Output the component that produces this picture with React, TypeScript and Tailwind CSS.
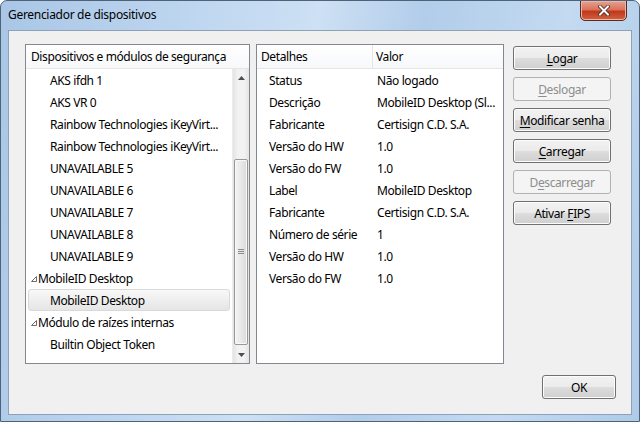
import React from "react";

type Row = { t: string; kind: "child" | "parent" | "selected" };

const tree: Row[] = [
  { t: "AKS ifdh 1", kind: "child" },
  { t: "AKS VR 0", kind: "child" },
  { t: "Rainbow Technologies iKeyVirt...", kind: "child" },
  { t: "Rainbow Technologies iKeyVirt...", kind: "child" },
  { t: "UNAVAILABLE 5", kind: "child" },
  { t: "UNAVAILABLE 6", kind: "child" },
  { t: "UNAVAILABLE 7", kind: "child" },
  { t: "UNAVAILABLE 8", kind: "child" },
  { t: "UNAVAILABLE 9", kind: "child" },
  { t: "MobileID Desktop", kind: "parent" },
  { t: "MobileID Desktop", kind: "selected" },
  { t: "Módulo de raízes internas", kind: "parent" },
  { t: "Builtin Object Token", kind: "child" },
];

const details: [string, string][] = [
  ["Status", "Não logado"],
  ["Descrição", "MobileID Desktop (Sl..."],
  ["Fabricante", "Certisign C.D. S.A."],
  ["Versão do HW", "1.0"],
  ["Versão do FW", "1.0"],
  ["Label", "MobileID Desktop"],
  ["Fabricante", "Certisign C.D. S.A."],
  ["Número de série", "1"],
  ["Versão do HW", "1.0"],
  ["Versão do FW", "1.0"],
];

function Tri() {
  return (
    <svg width="6" height="6" viewBox="0 0 6 6" className="shrink-0">
      <polygon points="5.5,0.5 5.5,5.5 0.5,5.5" fill="none" stroke="#6b6b6b" strokeWidth="1" />
    </svg>
  );
}

function Btn({
  pre,
  u,
  post,
  disabled,
}: {
  pre: string;
  u: string;
  post: string;
  disabled?: boolean;
}) {
  return (
    <div
      className={
        disabled
          ? "h-[24px] w-[98px] rounded-[3px] border border-[#adb2b5] bg-[#f4f4f4] text-[#8d8d8d] flex items-center justify-center pt-[1px]"
          : "h-[24px] w-[98px] rounded-[3px] border border-[#707070] bg-[linear-gradient(#f2f2f2_0%,#ebebeb_50%,#dddddd_51%,#cfcfcf_100%)] text-black flex items-center justify-center pt-[1px] shadow-[inset_0_0_0_1px_#fcfcfc]"
      }
    >
      <span>
        {pre}
        <span className="underline underline-offset-[2px]">{u}</span>
        {post}
      </span>
    </div>
  );
}

export default function App() {
  return (
    <div className="w-[640px] h-[422px] relative overflow-hidden rounded-t-[7px] border border-[#4f6378] bg-[linear-gradient(100deg,#a9c6e6_0%,#bcd5ef_25%,#cde0f4_45%,#b2cdea_60%,#c3daf1_80%,#afcbe8_100%)] font-['Noto_Sans',sans-serif] text-[12px] text-black flex flex-col">
      {/* title bar */}
      <div className="h-[29px] shrink-0 flex items-center pl-[7px] pb-[1px] text-[12px] tracking-[-0.3px]">
        Gerenciador de dispositivos
      </div>
      <div className="absolute top-[-1px] right-[12px] w-[47px] h-[21px] rounded-b-[5px] border border-[#5a2a21] bg-[linear-gradient(#e8a190_0%,#d9735c_45%,#c0391d_55%,#d2613d_100%)] flex items-center justify-center shadow-[inset_0_0_0_1px_#f0b4a5]">
        <svg width="12" height="11" viewBox="0 0 12 11">
          <path d="M2 1.5 L10 9.5 M10 1.5 L2 9.5" stroke="#3a1a14" strokeWidth="3.4" strokeLinecap="square" />
          <path d="M2 1.5 L10 9.5 M10 1.5 L2 9.5" stroke="#ffffff" strokeWidth="2" strokeLinecap="square" />
        </svg>
      </div>

      {/* client area */}
      <div className="mx-[7px] h-[385px] border border-[#8ea1b6] bg-[#f0f0f0] flex flex-col pl-[16px] pr-[15px] pt-[13px] tracking-[-0.4px]">
        <div className="flex h-[320px]">
          {/* tree panel */}
          <div className="w-[225px] h-[320px] border border-[#828790] bg-white flex flex-col">
            <div className="h-[24px] shrink-0 flex items-center pl-[5px] pt-[1px] border-b border-[#e5e5e5] bg-[linear-gradient(#ffffff,#f7f8fa)]">
              Dispositivos e módulos de segurança
            </div>
            <div className="flex flex-1 min-h-0">
              <div className="flex-1 flex flex-col">
                {tree.map((r, i) =>
                  r.kind === "parent" ? (
                    <div key={i} className="h-[22px] flex items-center pl-[5px] pt-[2px] gap-[1px]">
                      <Tri />
                      <span className="whitespace-nowrap">{r.t}</span>
                    </div>
                  ) : r.kind === "selected" ? (
                    <div
                      key={i}
                      className="h-[22px] mx-[2px] flex items-center pl-[21px] pt-[2px] rounded-[3px] border border-[#d9d9d9] bg-[linear-gradient(#f8f8f8,#e5e5e5)]"
                    >
                      <span className="whitespace-nowrap">{r.t}</span>
                    </div>
                  ) : (
                    <div key={i} className="h-[22px] flex items-center pl-[24px] pt-[2px]">
                      <span className="whitespace-nowrap">{r.t}</span>
                    </div>
                  )
                )}
              </div>
              {/* scrollbar */}
              <div className="w-[17px] shrink-0 flex flex-col bg-[linear-gradient(90deg,#e3e3e3,#f2f2f2_30%,#f2f2f2_70%,#e3e3e3)] border-l border-[#ececec]">
                <div className="h-[17px] flex items-center justify-center">
                  <svg width="7" height="4" viewBox="0 0 7 4">
                    <polygon points="0,4 3.5,0 7,4" fill="#4d4d4d" />
                  </svg>
                </div>
                <div className="h-[73px]" />
                <div className="h-[186px] mx-[1px] rounded-[2px] border border-[#979797] bg-[linear-gradient(90deg,#f3f3f3,#e9e9e9_50%,#d9d9d9)] shadow-[inset_0_0_0_1px_#f9f9f9] flex items-center justify-center">
                  <div className="flex flex-col gap-[1px] mt-[-2px]">
                    <div className="w-[6px] h-[1px] bg-[#8a8a8a]" />
                    <div className="w-[6px] h-[1px] bg-[#8a8a8a]" />
                    <div className="w-[6px] h-[1px] bg-[#8a8a8a]" />
                  </div>
                </div>
                <div className="flex-1" />
                <div className="h-[17px] flex items-center justify-center">
                  <svg width="7" height="4" viewBox="0 0 7 4">
                    <polygon points="0,0 3.5,4 7,0" fill="#4d4d4d" />
                  </svg>
                </div>
              </div>
            </div>
          </div>

          {/* details panel */}
          <div className="ml-[6px] w-[248px] h-[320px] border border-[#828790] bg-white flex flex-col">
            <div className="h-[24px] shrink-0 flex border-b border-[#e5e5e5] bg-[linear-gradient(#ffffff,#f7f8fa)]">
              <div className="w-[116px] flex items-center pl-[4px] pt-[1px] border-r border-[#e5e5e5]">Detalhes</div>
              <div className="flex items-center pl-[3px] pt-[1px]">Valor</div>
            </div>
            {details.map(([k, v], i) => (
              <div key={i} className="h-[22px] flex items-center pt-[2px]">
                <div className="w-[120px] pl-[12px] whitespace-nowrap">{k}</div>
                <div className="whitespace-nowrap">{v}</div>
              </div>
            ))}
          </div>

          {/* buttons */}
          <div className="ml-[9px] pt-[2px] flex flex-col gap-[7px]">
            <Btn pre="" u="L" post="ogar" />
            <Btn pre="" u="D" post="eslogar" disabled />
            <Btn pre="" u="M" post="odificar senha" />
            <Btn pre="" u="C" post="arregar" />
            <Btn pre="D" u="e" post="scarregar" disabled />
            <Btn pre="Ativar " u="F" post="IPS" />
          </div>
        </div>

        <div className="mt-[11px] flex justify-end">
          <div className="h-[24px] w-[74px] rounded-[3px] border border-[#707070] bg-[linear-gradient(#f2f2f2_0%,#ebebeb_50%,#dddddd_51%,#cfcfcf_100%)] shadow-[inset_0_0_0_1px_#fcfcfc] flex items-center justify-center pt-[1px]">
            OK
          </div>
        </div>
      </div>
    </div>
  );
}
